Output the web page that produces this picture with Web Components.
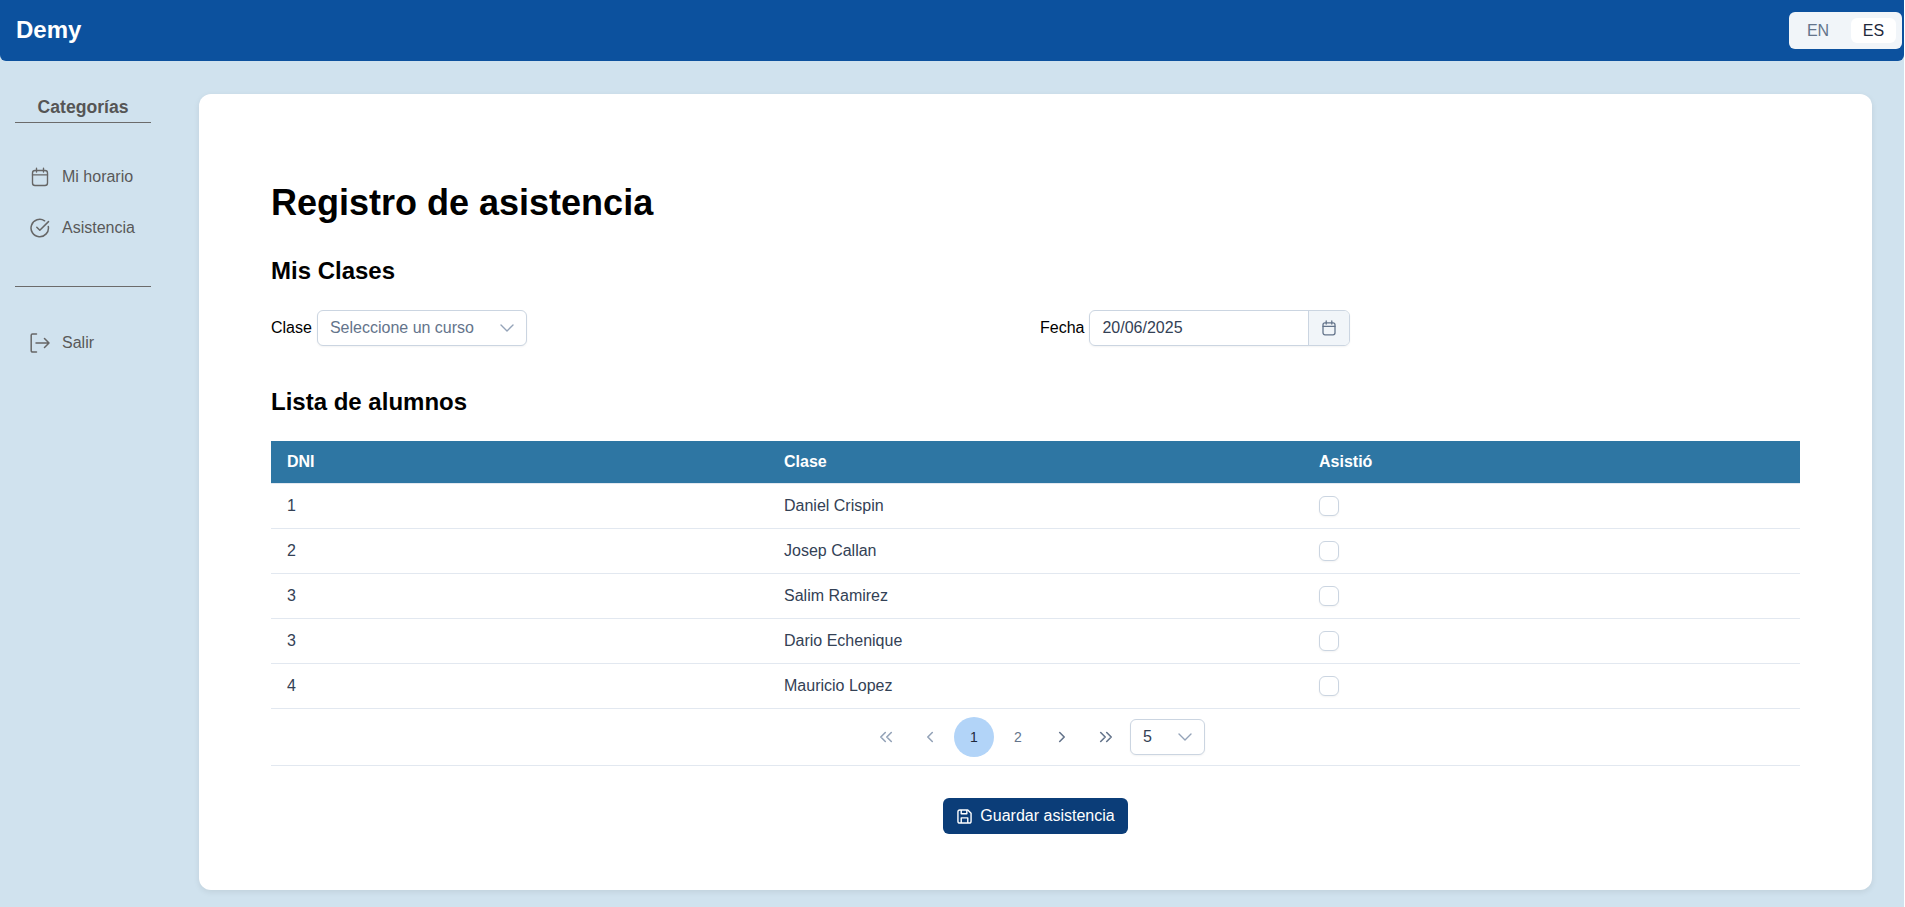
<!DOCTYPE html>
<html lang="es"><head><meta charset="utf-8"><title>Demy</title>
<style>
html{background:#fff}
html,body{margin:0;height:100%}
body{width:1904px;background:#d0e2ee;font-family:"Liberation Sans",Arial,sans-serif;overflow:hidden}
</style></head><body>
<demy-app></demy-app>
<script>
const CAL=w=>`<svg viewBox="0 0 16 16" width="100%" height="100%" fill="none" stroke="currentColor" stroke-width="${w}" stroke-linecap="round" stroke-linejoin="round"><rect x="2" y="2.800" width="12" height="12" rx="2"/><path d="M2 6.300h12M5.200 1v3M10.800 1v3"/></svg>`;
const CHEV='<svg width="14" height="14" viewBox="0 0 14 14" fill="none" stroke="currentColor" stroke-width="1.400" stroke-linecap="round" stroke-linejoin="round"><path d="M1 4l6 6 6-6"/></svg>';
function def(name,html){customElements.define(name,class extends HTMLElement{constructor(){super();this.attachShadow({mode:'open'}).innerHTML=typeof html==='function'?html(this):html;}})}

def('demy-lang',`<style>
:host{display:flex;gap:10px;width:113px;height:37px;box-sizing:border-box;background:#f1f5f9;border-radius:6px;padding:6px;color:#64748b;font-size:16px}
span{flex:0 0 46px;display:flex;align-items:center;justify-content:center;border-radius:6px}
.on{background:#fff;color:#1e293b;flex:0 0 45px}
</style><span>EN</span><span class="on">ES</span>`);

def('demy-header',`<style>
:host{display:flex;align-items:center;justify-content:space-between;height:61px;background:#0c519e;border-radius:0 0 6px 6px;padding:0 2px 0 16px;box-sizing:border-box;color:#fff}
b{font-size:24px;font-weight:700;position:relative;top:-1px}
</style><b>Demy</b><demy-lang></demy-lang>`);

def('nav-item',h=>`<style>
:host{display:flex;align-items:center;gap:12px;height:51px;padding-left:15px;color:#595959;font-size:16px}
.i{width:20px;height:20px;display:block;color:#666}
</style><span class="i">${{cal:CAL(1.1),
check:'<svg viewBox="0 0 20 20" width="20" height="20" fill="none" stroke="currentColor" stroke-width="1.500" stroke-linecap="round" stroke-linejoin="round"><path d="M18.300 8.500A8.700 8.700 0 1 1 14.600 2.800"/><path d="M6.800 9.300l3 3 8.700-8.700"/></svg>',
out:'<svg viewBox="0 0 20 20" width="20" height="20" fill="none" stroke="currentColor" stroke-width="1.500" stroke-linecap="round" stroke-linejoin="round"><path d="M6.500 1H2.500A1.300 1.300 0 0 0 1.200 2.300v15.400A1.300 1.300 0 0 0 2.500 19h4M6 10h13M14.500 5.500L19 10l-4.500 4.500"/></svg>'}[h.getAttribute('icon')]}</span><slot></slot>`);

def('demy-sidebar',`<style>
:host{display:block;width:136px;margin-left:15px;flex:none;padding-top:36px;color:#595959}
h3{margin:0;font-size:17.600px;line-height:21px;font-weight:700;text-align:center;padding-bottom:4px;border-bottom:1px solid #6b6b6b;color:#555}
.top{margin-top:28px;padding-bottom:33px;border-bottom:1px solid #6b6b6b}
.bot{margin-top:30px}
</style><h3>Categorías</h3>
<div class="top"><nav-item icon="cal">Mi horario</nav-item><nav-item icon="check">Asistencia</nav-item></div>
<div class="bot"><nav-item icon="out">Salir</nav-item></div>`);

def('demy-select',h=>`<style>
:host{display:inline-flex;align-items:center;justify-content:space-between;box-sizing:border-box;height:36px;border:1px solid #cbd5e1;border-radius:6px;padding:0 12px;background:#fff;font-size:16px;color:${h.hasAttribute('value')?'#334155':'#64748b'};box-shadow:0 1px 2px rgba(18,18,23,.05)}
span{display:flex;color:#94a3b8}
</style><slot></slot><span>${CHEV}</span>`);

def('demy-date',`<style>
:host{display:inline-flex;box-sizing:border-box;height:36px;width:261px;border:1px solid #cbd5e1;border-radius:6px;font-size:16px;color:#334155;box-shadow:0 1px 2px rgba(18,18,23,.05);overflow:hidden}
.v{flex:1;display:flex;align-items:center;padding-left:12px}
.b{width:40px;display:flex;align-items:center;justify-content:center;background:#f1f5f9;border-left:1px solid #cbd5e1;color:#64748b}
.b span{width:16px;height:16px;display:block}
</style><div class="v"><slot></slot></div><div class="b"><span>${CAL(1.300)}</span></div>`);

def('demy-filters',`<style>
:host{display:flex;font-size:16px;color:#000;height:36px;align-items:center}
.c{width:769px;display:flex;align-items:center;gap:5px;flex:none}
.f{display:flex;align-items:center;gap:5px}
demy-select{width:210px}
</style><div class="c">Clase <demy-select>Seleccione un curso</demy-select></div>
<div class="f">Fecha <demy-date>20/06/2025</demy-date></div>`);

def('att-table',()=>{const rows=[['1','Daniel Crispin'],['2','Josep Callan'],['3','Salim Ramirez'],['3','Dario Echenique'],['4','Mauricio Lopez']];
return `<style>
:host{display:block;font-size:16px;color:#334155}
.r{display:grid;grid-template-columns:497px 535px 1fr;align-items:center;box-sizing:border-box;padding-left:16px}
.h{height:43px;background:#2e76a3;color:#fff;font-weight:700;border-bottom:1px solid #e2e8f0}
.d{height:45px;border-bottom:1px solid #e2e8f0}
.cb{display:block;width:20px;height:20px;box-sizing:border-box;border:1px solid #cbd5e1;border-radius:6px;background:#fff;box-shadow:0 1px 2px rgba(18,18,23,.05)}
</style><div class="r h"><span>DNI</span><span>Clase</span><span>Asistió</span></div>
${rows.map(r=>`<div class="r d"><span>${r[0]}</span><span>${r[1]}</span><span class="cb"></span></div>`).join('')}`});

const pg=p=>`<svg width="14" height="14" viewBox="0 0 14 14" fill="none" stroke="currentColor" stroke-width="1.600" stroke-linecap="round" stroke-linejoin="round"><path d="${p}"/></svg>`;
def('att-pager',`<style>
:host{display:flex;align-items:center;justify-content:center;gap:4px;height:57px;border-bottom:1px solid #e2e8f0;font-size:14px;color:#64748b;box-sizing:border-box}
.p{width:40px;height:40px;display:flex;align-items:center;justify-content:center;border-radius:50%;flex:none}
.off{color:#94a3b8}
.on{background:#b2d4f8;color:#1e293b}
demy-select{width:75px}
</style>
<span class="p off">${pg('M6.300 2.500L1.800 7l4.500 4.500M12.300 2.500L7.800 7l4.500 4.500')}</span>
<span class="p off">${pg('M9.300 2.500L4.800 7l4.500 4.500')}</span>
<span class="p on">1</span><span class="p">2</span>
<span class="p">${pg('M4.700 2.500L9.200 7l-4.500 4.500')}</span>
<span class="p">${pg('M1.700 2.500L6.200 7l-4.500 4.500M7.700 2.500L12.200 7l-4.500 4.500')}</span>
<demy-select value>5</demy-select>`);

def('demy-button',`<style>
:host{display:inline-flex;align-items:center;gap:8px;height:36px;box-sizing:border-box;padding:0 13px 0 14px;border-radius:6px;background:#0b3d78;color:#fff;font-size:16px}
svg{display:block}
</style><svg width="15" height="15" viewBox="0 0 16 16" fill="none" stroke="currentColor" stroke-width="1.500" stroke-linejoin="round"><path d="M1 3A2 2 0 0 1 3 1h8.500L15 4.500V13A2 2 0 0 1 13 15H3A2 2 0 0 1 1 13z"/><path d="M4.500 1v4h6V1M4.500 15V9.500h7V15"/></svg><slot></slot>`);

def('demy-card',`<style>
:host{display:block;flex:1;box-sizing:border-box;height:796px;background:#fff;border-radius:12px;padding:88px 72px 0;box-shadow:0 2px 6px rgba(0,0,0,.08);color:#000}
h1{margin:0;font-size:36px;line-height:42px;font-weight:700}
h2{margin:0;font-size:24px;line-height:28px;font-weight:700}
.a{margin-top:33px}.f{margin-top:25px}.b{margin-top:42px}.t{margin-top:25px}
.s{display:flex;justify-content:center;margin-top:32px}
</style>
<h1>Registro de asistencia</h1>
<h2 class="a">Mis Clases</h2>
<demy-filters class="f"></demy-filters>
<h2 class="b">Lista de alumnos</h2>
<att-table class="t"></att-table>
<att-pager></att-pager>
<div class="s"><demy-button>Guardar asistencia</demy-button></div>`);

def('demy-app',`<style>
:host{display:block;width:1904px;height:907px}
.m{display:flex;align-items:flex-start}
demy-card{margin:33px 32px 0 48px}
</style><demy-header></demy-header><div class="m"><demy-sidebar></demy-sidebar><demy-card></demy-card></div>`);
</script></body></html>
